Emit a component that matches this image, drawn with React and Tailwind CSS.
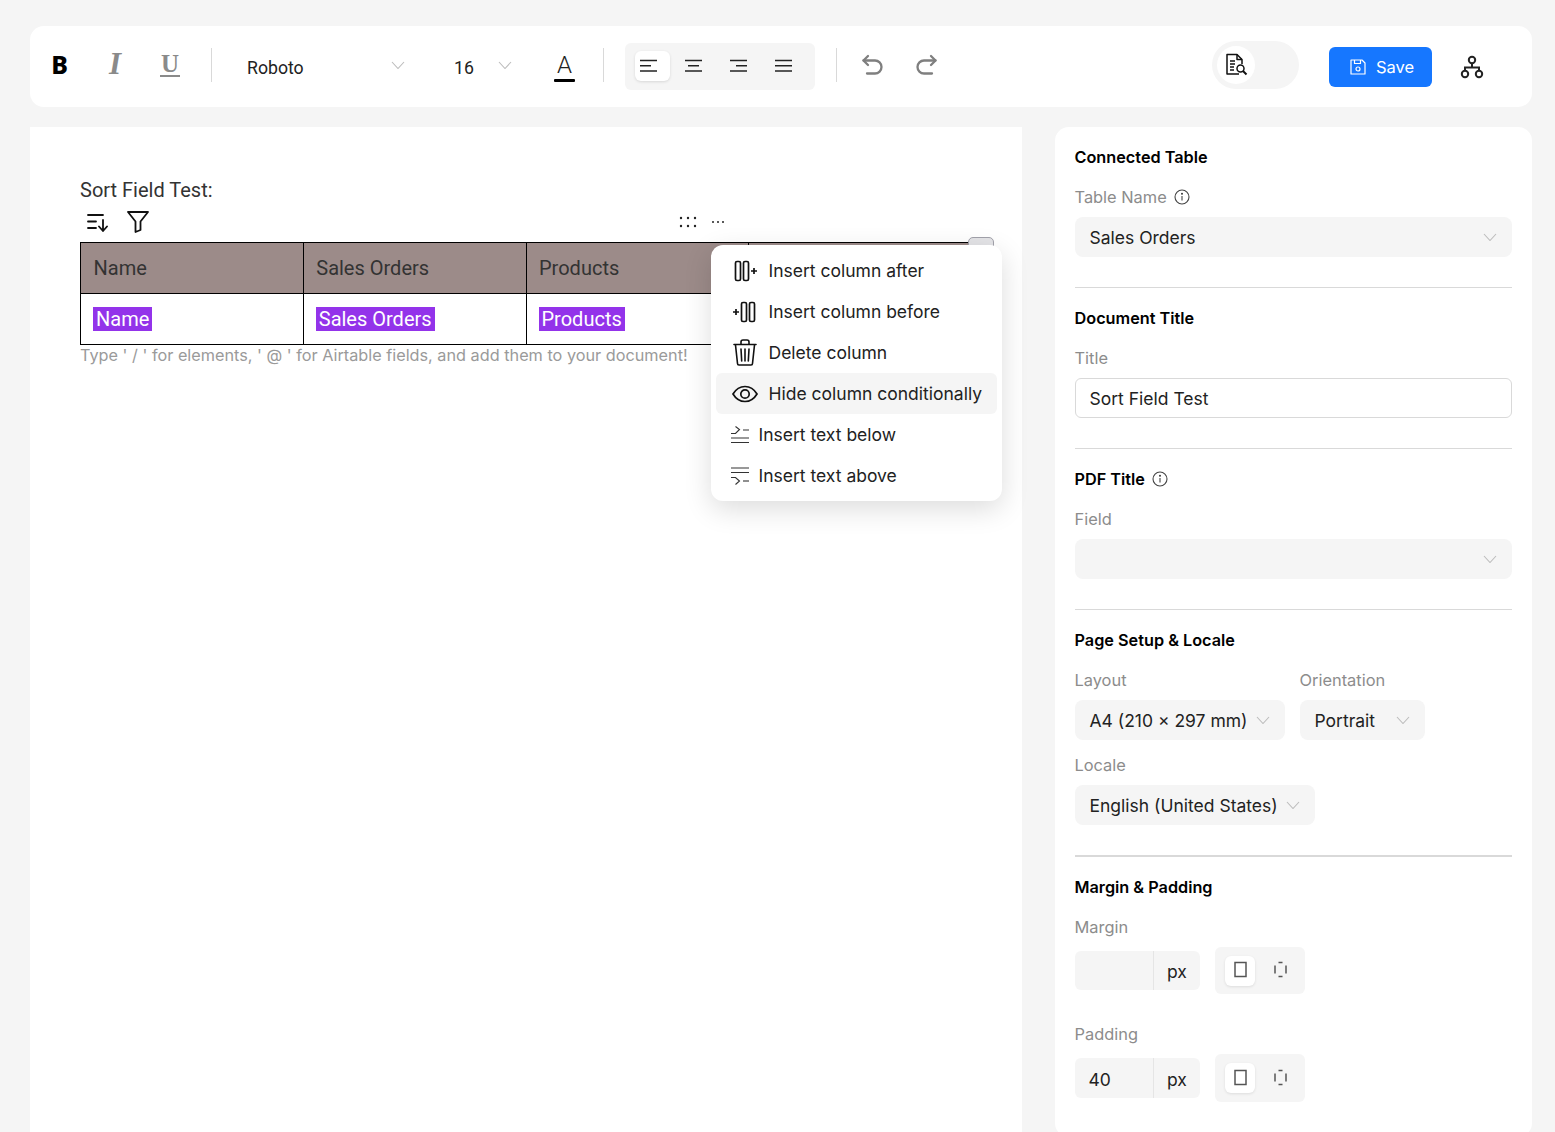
const sel = "flex items-center justify-between bg-[#f5f5f5] rounded-[8px] h-10 pl-[14.5px] pr-[15px] text-[#222] text-[17.5px]";

const Chevron = ({ className = "" }) => (
  <svg width="14" height="8" viewBox="0 0 14 8" fill="none" stroke="#bdbdbd" strokeWidth="1.1" className={className}><path d="M1 1l6 6.5L13 1" /></svg>
);

const Select = ({ value, className = "" }) => (
  <div className={`${sel} ${className}`}>
    <span className="whitespace-nowrap pt-[2px]">{value}</span>
    <Chevron />
  </div>
);

const Info = () => (
  <svg width="16" height="16" viewBox="0 0 16 16" fill="none" stroke="#444" strokeWidth="1.1">
    <circle cx="8" cy="8" r="7" />
    <path d="M8 7v4.5" />
    <circle cx="8" cy="4.8" r=".5" fill="#444" />
  </svg>
);

const Heading = ({ children, info }) => (
  <div className="flex items-center gap-[7px] h-5 font-semibold text-[16.25px] text-black -ml-[0.5px]">
    {children}
    {info && <Info />}
  </div>
);

const Label = ({ children, info }) => (
  <div className="flex items-center gap-[7px] h-5 text-[16.4px] text-[#8c8c8c] -ml-[0.5px]">
    {children}
    {info && <Info />}
  </div>
);

const Rule = ({ strong }) => <div className={`mt-[30px] mb-5 bg-[#d9d9d9] ${strong ? "h-[2px]" : "h-px"}`} />;

const Align = ({ lines, active }) => (
  <div className={`w-[35px] h-[30px] rounded-[6px] flex items-center justify-center ${active ? "bg-white shadow-[0_1px_3px_rgba(0,0,0,0.12)]" : ""}`}>
    <svg width="18" height="14" viewBox="0 0 18 14" stroke="#222" strokeWidth="1.5" className="mr-2 mb-[1px]">
      {lines.map(([a, b], i) => <path key={i} d={`M${a} ${1.5 + i * 5.25}H${b}`} />)}
    </svg>
  </div>
);

const Toolbar = () => (
  <div className="flex items-center h-[81px] bg-white rounded-[14px] shrink-0">
    <div className="w-[59px] flex justify-center -mt-1 text-[25px] font-extrabold text-black font-['Noto_Sans',sans-serif]">B</div>
    <div className="w-[50px] flex justify-center ml-[1px] -mt-[5px] text-[31px] leading-[36px] font-bold italic text-[#8a8a8a] font-['Liberation_Serif',serif]">I</div>
    <div className="w-[50px] flex justify-center -mt-1 ml-[5px]">
      <span className="text-[25px] leading-[26px] font-bold text-[#8a8a8a] border-b-2 border-[#8a8a8a] font-['Liberation_Serif',serif] px-px h-[25px] flex items-center">U</span>
    </div>
    <div className="w-px h-[34px] bg-[#d9d9d9] ml-4 -mt-[3px]" />
    <div className="flex items-center justify-between w-[158px] ml-[35px] text-[17.7px] text-[#222] font-['Roboto',sans-serif]">
      <span className="pt-[3px]">Roboto</span>
      <Chevron className="-mt-[2px]" />
    </div>
    <div className="flex items-center justify-between w-[58px] ml-[49px] text-[17.7px] text-[#222] font-['Roboto',sans-serif]">
      <span className="pt-[3px] font-normal">16</span>
      <Chevron className="-mt-[2px]" />
    </div>
    <div className="ml-[42px] mt-[2px] flex flex-col items-center w-[21px] h-[34px] text-[24px] leading-[28px] text-[#222] font-['Roboto',sans-serif] font-light">
      A
      <div className="w-[21px] h-[3px] bg-black rounded-[1px]" />
    </div>
    <div className="w-px h-[34px] bg-[#d9d9d9] ml-7 -mt-[3px]" />
    <div className="flex items-center w-[190px] h-[47px] ml-[21px] -mt-[1px] px-[10px] bg-[#f5f5f5] rounded-[6px]">
      <div className="flex items-center gap-[10px]">
        <Align active lines={[[0, 17], [0, 11], [0, 17]]} />
        <Align lines={[[0, 17], [3, 14], [0, 17]]} />
        <Align lines={[[0, 17], [6, 17], [0, 17]]} />
        <Align lines={[[0, 17], [0, 17], [0, 17]]} />
      </div>
    </div>
    <div className="w-px h-[34px] bg-[#d9d9d9] ml-[21px] -mt-[3px]" />
    <div className="flex items-center gap-[33px] ml-6 -mt-[3px]">
      <svg width="22" height="24" viewBox="0 0 22 24" fill="none" stroke="#7f7f7f" strokeWidth="2.3" strokeLinecap="round" strokeLinejoin="round"><path d="M7 3L2.500 7.500 7 12" /><path d="M2.500 7.500H14a6 6 0 0 1 0 13H6" /></svg>
      <svg width="22" height="24" viewBox="0 0 22 24" fill="none" stroke="#7f7f7f" strokeWidth="2.3" strokeLinecap="round" strokeLinejoin="round"><path d="M15 3l4.500 4.500L15 12" /><path d="M19.500 7.500H8a6 6 0 0 0 0 13h8" /></svg>
    </div>
    <div className="ml-[274px] w-[87px] h-12 rounded-full bg-[#f5f5f5] flex items-center pl-[5px] -mt-[4px]">
      <div className="w-[38px] h-[38px] rounded-full bg-white flex items-center justify-center">
        <svg width="24" height="24" viewBox="0 0 24 24" fill="none" stroke="#111" strokeWidth="1.5" strokeLinejoin="round">
          <path d="M15 21H3V1.500h10l5 5V11" />
          <path d="M13 1.500v5h5" />
          <path d="M6 8h5M6 11h5M6 14h4M6 17h4" />
          <circle cx="16.500" cy="15.500" r="3.500" />
          <path d="M19 18l3.500 3.500" strokeWidth="2" />
        </svg>
      </div>
    </div>
    <div className="ml-[30px] w-[103px] h-10 rounded-[6px] bg-[#1677ff] flex items-center pl-5 gap-[9px] text-white text-[16.5px]">
      <svg width="18" height="18" viewBox="0 0 18 18" fill="none" stroke="#fff" strokeWidth="1.200" strokeLinejoin="round">
        <path d="M2 2h11l3 3v11H2z" />
        <path d="M5.500 2v3.500h6V2" />
        <circle cx="9" cy="11" r="2" />
      </svg>
      <span className="pt-[2px]">Save</span>
    </div>
    <div className="ml-[27px]">
      <svg width="26" height="26" viewBox="0 0 26 26" fill="none" stroke="#222" strokeWidth="2">
        <circle cx="13" cy="6" r="3.200" />
        <circle cx="6" cy="20" r="3.200" />
        <circle cx="20" cy="20" r="3.200" />
        <path d="M13 9.500V13.500M6 16.800V13.500H20V16.800" />
      </svg>
    </div>
  </div>
);

const Pill = ({ children }) => (
  <span className="bg-[#9333ea] text-white px-[3px] h-6 inline-flex items-center text-[20px]">{children}</span>
);

const headers = ["Name", "Sales Orders", "Products", ""];
const cells = ["Name", "Sales Orders", "Products", ""];

const InsertAfter = () => (
  <svg width="26" height="22" viewBox="0 0 26 22" fill="none" stroke="#111" strokeWidth="1.700">
    <rect x="3.500" y="1.500" width="5" height="19" rx="1.500" />
    <rect x="11.500" y="1.500" width="5" height="19" rx="1.500" />
    <path d="M19 11h6M22 8v6" />
  </svg>
);
const InsertBefore = () => (
  <svg width="26" height="22" viewBox="0 0 26 22" fill="none" stroke="#111" strokeWidth="1.700">
    <path d="M1 11h6M4 8v6" />
    <rect x="9.500" y="1.500" width="5" height="19" rx="1.500" />
    <rect x="17.500" y="1.500" width="5" height="19" rx="1.500" />
  </svg>
);
const Trash = () => (
  <svg width="24" height="27" viewBox="0 0 24 27" fill="none" stroke="#111" strokeWidth="1.600" strokeLinecap="round" strokeLinejoin="round">
    <path d="M1 5.500h22" />
    <path d="M8 5V3a2 2 0 0 1 2-2h4a2 2 0 0 1 2 2v2" />
    <path d="M2.500 6l2 18.500a1.500 1.500 0 0 0 1.500 1.500h12a1.500 1.500 0 0 0 1.500-1.500L21.500 6" />
    <path d="M8 10l.7 12M12 10v12M16 10l-.7 12" />
  </svg>
);
const Eye = () => (
  <svg width="26" height="18" viewBox="0 0 26 18" fill="none" stroke="#111" strokeWidth="1.700">
    <path d="M1 9c3-5 7-7.500 12-7.500S22 4 25 9c-3 5-7 7.500-12 7.500S4 14 1 9z" />
    <circle cx="13" cy="9" r="4.200" />
  </svg>
);
const TextBelow = () => (
  <svg width="18" height="18" viewBox="0 0 18 18" fill="none" stroke="#333" strokeWidth="1.100">
    <path d="M0 7.500h4.500L8.500 3.500 4.500 0.500" />
    <path d="M12 4h6M0 12h18M0 16.500h18" />
  </svg>
);
const TextAbove = () => (
  <svg width="18" height="18" viewBox="0 0 18 18" fill="none" stroke="#333" strokeWidth="1.100">
    <path d="M0 1h18M0 5.500h18" />
    <path d="M0 10.500h4.500L8.500 14 4.500 17.500" />
    <path d="M12 14h6" />
  </svg>
);

const Item = ({ icon, label, active, small }) => (
  <div className={`flex items-center h-[41px] rounded-[6px] pl-[14px] whitespace-nowrap ${small ? "gap-[8.5px]" : "gap-[8.5px]"} ${active ? "bg-[#f5f5f5]" : ""}`}>
    <div className={`${small ? "w-5" : "w-[30px]"} flex justify-center`}>{icon}</div>
    <span className="pt-[2px]">{label}</span>
  </div>
);

const Document = () => (
  <div className="relative w-[992px] bg-white pt-[51px] px-[50px] shrink-0">
    <div className="font-['Roboto',sans-serif] text-[20px] leading-[24px] text-[#333]">Sort Field Test:</div>
    <div className="flex items-center h-10 pl-[7px] gap-[17px]">
      <svg width="22" height="20" viewBox="0 0 22 20" fill="none" stroke="#111" strokeWidth="1.800" strokeLinecap="round" strokeLinejoin="round">
        <path d="M1 3h15M1 9.500h8M1 16h8" />
        <path d="M16 8v11M12 14.500l4 4.500 4-4.500" />
      </svg>
      <svg width="24" height="24" viewBox="0 0 24 24" fill="none" stroke="#111" strokeWidth="1.800" strokeLinejoin="round" className="-mt-[2px]">
        <path d="M2 3h20l-7.500 9.500V21l-5 2V12.500z" />
      </svg>
      <div className="ml-[512px] flex items-center gap-[14px]">
        <svg width="18" height="12" viewBox="0 0 18 12" fill="#222">
          <circle cx="2" cy="2" r="1.200" /><circle cx="9" cy="2" r="1.200" /><circle cx="16" cy="2" r="1.200" />
          <circle cx="2" cy="10" r="1.200" /><circle cx="9" cy="10" r="1.200" /><circle cx="16" cy="10" r="1.200" />
        </svg>
        <svg width="14" height="4" viewBox="0 0 14 4" fill="#222">
          <circle cx="2" cy="2" r="1" /><circle cx="7" cy="2" r="1" /><circle cx="12" cy="2" r="1" />
        </svg>
      </div>
    </div>
    <table className="w-[892px] border-collapse table-fixed font-['Roboto',sans-serif] text-[20px]">
      <thead>
        <tr className="h-[51px] bg-[#9c8b89]">
          {headers.map((h, i) => <th key={i} className="border border-black text-left font-normal px-[12.5px] text-[#333]">{h}</th>)}
        </tr>
      </thead>
      <tbody>
        <tr className="h-[51px]">
          {cells.map((c, i) => <td key={i} className="border border-black px-3">{c && <Pill>{c}</Pill>}</td>)}
        </tr>
      </tbody>
    </table>
    <div className="text-[16.25px] leading-[20px] text-[#9a9a9a]">Type ' / ' for elements, ' @ ' for Airtable fields, and add them to your document!</div>
    <div className="absolute left-[938px] top-[110px] w-[26px] h-5 rounded-[5px] bg-[#e4e4e7] border border-[#a1a1aa]" />
    <div className="absolute left-[681px] top-[118px] w-[291px] h-[256px] bg-white rounded-[12px] shadow-[0_8px_28px_rgba(0,0,0,0.14)] p-[5px] text-[17.500px] text-[#222]">
      <Item icon={<InsertAfter />} label="Insert column after" />
      <Item icon={<InsertBefore />} label="Insert column before" />
      <Item icon={<Trash />} label="Delete column" />
      <Item icon={<Eye />} label="Hide column conditionally" active />
      <Item small icon={<TextBelow />} label="Insert text below" />
      <Item small icon={<TextAbove />} label="Insert text above" />
    </div>
  </div>
);

const Box = ({ dashed }) => (
  <svg width="15" height="17" viewBox="0 0 15 17" fill="none" stroke="#555" strokeWidth="1.500" className="mb-[2px]">
    {dashed
      ? <path d="M2 4.500v8M13 4.500v8M5.500 1.500h4M5.500 15.500h4" />
      : <rect x="2" y="1.500" width="11" height="14" />}
  </svg>
);

const Spacing = ({ value, h, ih }) => (
  <div className="flex items-center gap-[15px]">
    <div className={`flex w-[125px] ${ih} bg-[#f5f5f5] rounded-[6px] text-[17.500px] text-[#222]`}>
      <div className="w-[79px] border-r border-[#e5e5e5] flex items-center pl-[13.5px] pt-[4px]">{value}</div>
      <div className="flex-1 flex items-center justify-center pt-[4px]">px</div>
    </div>
    <div className={`flex items-center w-[90px] ${h} bg-[#f5f5f5] rounded-[6px] pl-[10px]`}>
      <div className="w-[30px] h-[30px] bg-white rounded-[6px] flex items-center justify-center shadow-[0_1px_3px_rgba(0,0,0,0.1)]"><Box /></div>
      <div className="w-[30px] ml-[10px] flex justify-center"><Box dashed /></div>
    </div>
  </div>
);

const Panel = () => (
  <div className="w-[477px] h-[1010px] bg-white rounded-[14px] px-5 pt-5 shrink-0 font-['Inter',sans-serif]">
    <Heading>Connected Table</Heading>
    <div className="mt-5"><Label info>Table Name</Label></div>
    <Select className="mt-[10px]" value="Sales Orders" />
    <Rule />
    <Heading>Document Title</Heading>
    <div className="mt-5"><Label>Title</Label></div>
    <div className="mt-[10px] flex items-center h-10 pl-[13.5px] pt-[2px] rounded-[6px] border border-[#d9d9d9] text-[17.500px] text-[#222]">Sort Field Test</div>
    <Rule />
    <Heading info>PDF Title</Heading>
    <div className="mt-5"><Label>Field</Label></div>
    <div className="mt-[10px] flex items-center justify-end h-10 px-[15px] rounded-[8px] bg-[#f5f5f5]"><Chevron /></div>
    <Rule />
    <Heading>Page Setup &amp; Locale</Heading>
    <div className="flex gap-[15px] mt-5">
      <div className="w-[210px]">
        <Label>Layout</Label>
        <Select className="mt-[10px]" value="A4 (210 × 297 mm)" />
      </div>
      <div className="w-[125px]">
        <Label>Orientation</Label>
        <Select className="mt-[10px]" value="Portrait" />
      </div>
    </div>
    <div className="mt-[15px]"><Label>Locale</Label></div>
    <Select className="mt-[10px] w-[240px]" value="English (United States)" />
    <Rule strong />
    <Heading>Margin &amp; Padding</Heading>
    <div className="mt-5"><Label>Margin</Label></div>
    <div className="mt-[10px]"><Spacing value="" h="h-[47px]" ih="h-[39px]" /></div>
    <div className="mt-[30px]"><Label>Padding</Label></div>
    <div className="mt-[10px]"><Spacing value="40" h="h-[48px]" ih="h-10" /></div>
  </div>
);

export default function App() {
  return (
    <div className="h-[1132px] overflow-hidden bg-[#f5f5f5] pt-[26px] pl-[30px] pr-[23px] font-['Inter',sans-serif]">
      <Toolbar />
      <div className="flex gap-[33px] mt-5">
        <Document />
        <Panel />
      </div>
    </div>
  );
}
